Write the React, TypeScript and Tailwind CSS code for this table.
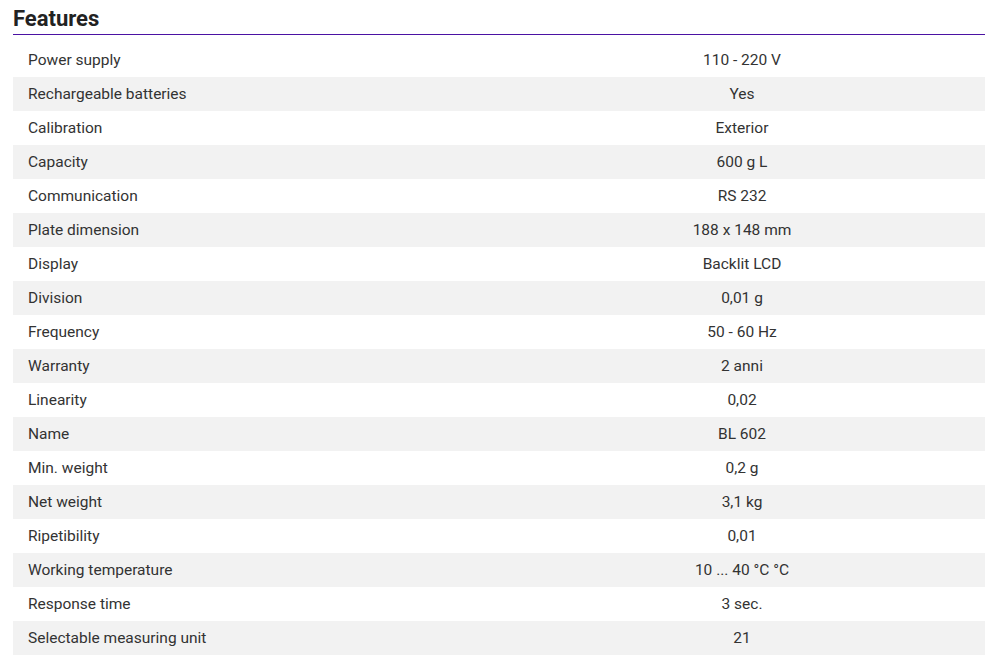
import React from "react";

const rows: [string, string][] = [
  ["Power supply", "110 - 220 V"],
  ["Rechargeable batteries", "Yes"],
  ["Calibration", "Exterior"],
  ["Capacity", "600 g L"],
  ["Communication", "RS 232"],
  ["Plate dimension", "188 x 148 mm"],
  ["Display", "Backlit LCD"],
  ["Division", "0,01 g"],
  ["Frequency", "50 - 60 Hz"],
  ["Warranty", "2 anni"],
  ["Linearity", "0,02"],
  ["Name", "BL 602"],
  ["Min. weight", "0,2 g"],
  ["Net weight", "3,1 kg"],
  ["Ripetibility", "0,01"],
  ["Working temperature", "10 ... 40 °C °C"],
  ["Response time", "3 sec."],
  ["Selectable measuring unit", "21"],
];

export default function App() {
  return (
    <div className="w-[993px] h-[664px] bg-white pl-[13px] pr-[8px] pt-[6px]" style={{ fontFamily: "Roboto, 'Noto Sans', sans-serif" }}>
      <h2 className="text-[22px] leading-[26px] font-bold text-[#222] pb-[2px] border-b border-[#4b12a3]">Features</h2>
      <div className="mt-[8px]">
        {rows.map(([k, v], i) => (
          <div key={k} className={`flex h-[34px] items-center pt-[2px] text-[15.5px] text-[#333] ${i % 2 === 1 ? "bg-[#f2f2f2]" : ""}`}>
            <div className="w-1/2 pl-[15px]">{k}</div>
            <div className="w-1/2 text-center">{v}</div>
          </div>
        ))}
      </div>
    </div>
  );
}
